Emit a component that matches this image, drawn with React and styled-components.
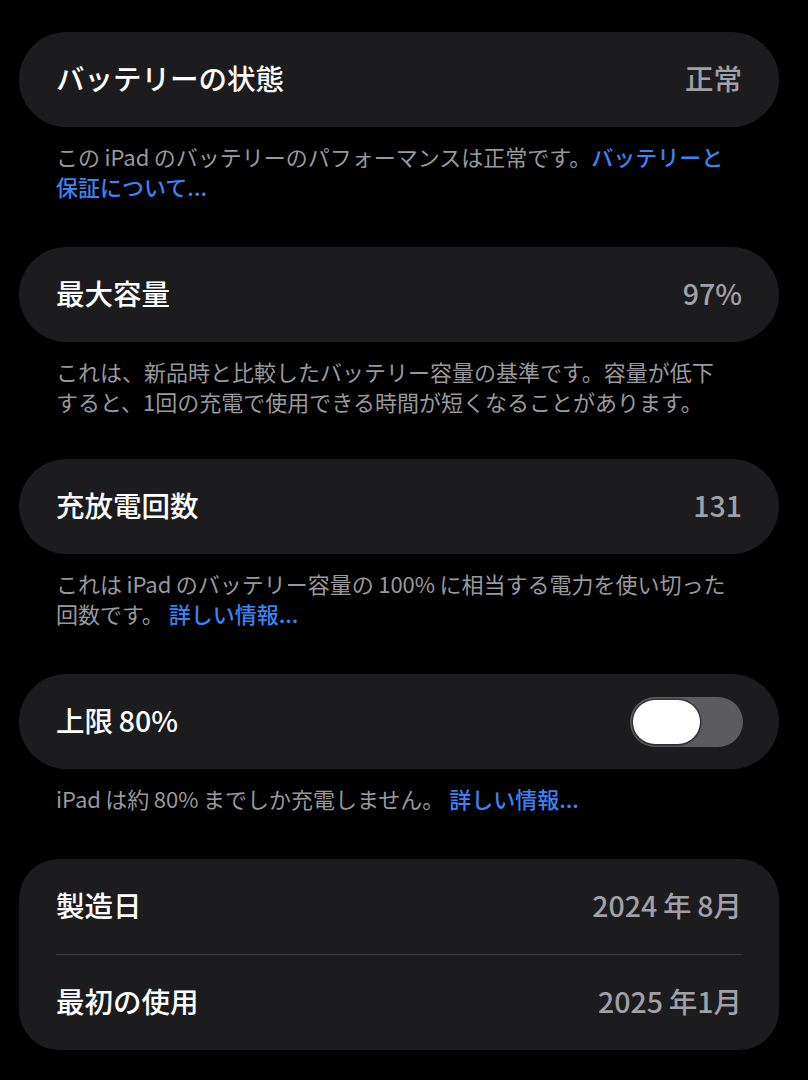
import React from "react";
import styled, { createGlobalStyle } from "styled-components";

const Global = createGlobalStyle`
  html, body { margin: 0; padding: 0; background: #000; }
  body { font-family: "Noto Sans CJK JP", "Noto Sans", sans-serif; -webkit-font-smoothing: antialiased; }
`;

const Page = styled.div`
  width: 808px;
  min-height: 1080px;
  box-sizing: border-box;
  padding: 32px 29px 0 19px;
  display: flex;
  flex-direction: column;
`;

const Section = styled.section`
  display: flex;
  flex-direction: column;
  margin-bottom: ${(p) => p.$gap || 46}px;
`;

const Card = styled.div`
  background: #1c1c1e;
  border-radius: ${(p) => (p.$multi ? "40px" : "48px")};
  display: flex;
  flex-direction: column;
`;

const Row = styled.div`
  height: 95px;
  box-sizing: border-box;
  padding: 0 37px 0 37px;
  display: flex;
  align-items: center;
  justify-content: space-between;
`;

const Separator = styled.div`
  height: 1px;
  margin: 0 37px;
  background: #3a3a3c;
`;

const Label = styled.span`
  color: #fff;
  font-size: 28.5px;
  font-weight: 500;
  line-height: 1;
  margin-top: -2px;
`;

const Value = styled.span`
  color: #a0a0a6;
  font-size: 28.5px;
  font-weight: 500;
  line-height: 1;
  margin-top: -2px;
`;

const Footer = styled.p`
  margin: 0;
  padding: 14px 37px 0 37px;
  color: #98989e;
  font-size: 22px;
  line-height: 30px;
  white-space: nowrap;
`;

const Link = styled.span`
  color: #3d82f2;
  font-weight: 500;
`;

const Toggle = styled.div`
  width: 113px;
  height: 50px;
  border-radius: 25px;
  background: #5b5b60;
  position: relative;
  margin-right: -1px;
`;

const Knob = styled.div`
  position: absolute;
  left: 3px;
  top: 3px;
  width: 67px;
  height: 44px;
  border-radius: 22px;
  background: #fff;
  box-shadow: 0 0 0 1.5px rgba(0, 0, 0, 0.35), 0 1px 3px rgba(0, 0, 0, 0.4);
`;

const T = "\u2009";

export default function App() {
  return (
    <>
      <Global />
      <Page>
        <Section>
          <Card>
            <Row>
              <Label>バッテリーの状態</Label>
              <Value>正常</Value>
            </Row>
          </Card>
          <Footer>
            この{T}iPad{T}のバッテリーのパフォーマンスは正常です。<Link>バッテリーと</Link>
            <br />
            <Link>保証について...</Link>
          </Footer>
        </Section>

        <Section $gap={43}>
          <Card>
            <Row>
              <Label>最大容量</Label>
              <Value>97%</Value>
            </Row>
          </Card>
          <Footer>
            これは、新品時と比較したバッテリー容量の基準です。容量が低下
            <br />
            すると、1回の充電で使用できる時間が短くなることがあります。
          </Footer>
        </Section>

        <Section>
          <Card>
            <Row>
              <Label>充放電回数</Label>
              <Value>131</Value>
            </Row>
          </Card>
          <Footer>
            これは{T}iPad{T}のバッテリー容量の{T}100%{T}に相当する電力を使い切った
            <br />
            回数です。 <Link>詳しい情報...</Link>
          </Footer>
        </Section>

        <Section>
          <Card>
            <Row>
              <Label>上限{T}80%</Label>
              <Toggle>
                <Knob />
              </Toggle>
            </Row>
          </Card>
          <Footer>
            iPad{T}は約{T}80%{T}までしか充電しません。 <Link>詳しい情報...</Link>
          </Footer>
        </Section>

        <Section>
          <Card $multi>
            <Row>
              <Label>製造日</Label>
              <Value>2024{T}年{T}8月</Value>
            </Row>
            <Separator />
            <Row>
              <Label>最初の使用</Label>
              <Value>2025{T}年1月</Value>
            </Row>
          </Card>
        </Section>
      </Page>
    </>
  );
}
